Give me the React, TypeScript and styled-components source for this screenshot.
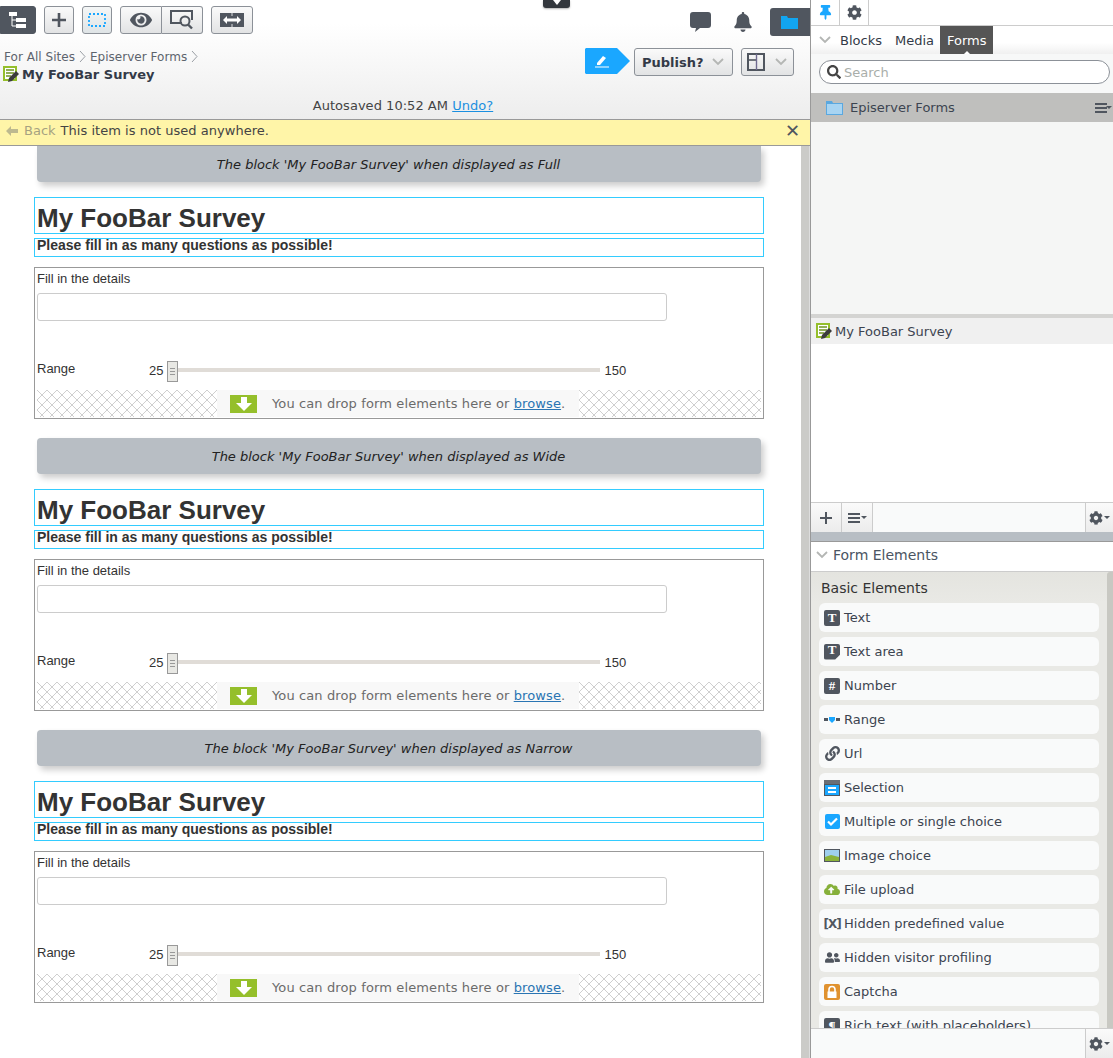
import React from "react";
import styled, { createGlobalStyle } from "styled-components";
import { FaBell, FaCog, FaEye, FaLink, FaSearch, FaThumbtack, FaUserFriends, FaCloudUploadAlt } from "react-icons/fa";

const Global = createGlobalStyle`
  html, body { margin: 0; padding: 0; background: #fff; }
  body { font-family: "DejaVu Sans", Verdana, sans-serif; font-size: 13px; color: #333; }
`;
const Page = styled.div`display: flex; width: 1113px; height: 1058px; overflow: hidden; position: relative;`;
const Main = styled.div`width: 810px; flex: none; display: flex; flex-direction: column;`;
const Header = styled.header`height: 119px; border-bottom: 1px solid #999; background: linear-gradient(#fff 20%, #ededed 100%); display: flex; flex-direction: column; box-sizing: content-box; flex: none;`;
const TopRow = styled.div`display: flex; align-items: flex-start; padding-top: 6px; height: 28px;`;
const Tools = styled.div`display: flex; gap: 8px; flex: 1;`;
const ToolBtn = styled.div<{ $w: number; $dark?: boolean; $tint?: boolean }>`
  width: ${p => p.$w}px; height: 28px; box-sizing: border-box; display: flex; align-items: center; justify-content: center;
  border: 1px solid ${p => (p.$dark ? "#50565f" : "#8c9198")}; border-radius: ${p => (p.$dark ? "0 3px 3px 0" : "3px")};
  background: ${p => (p.$dark ? "#50565f" : p.$tint ? "linear-gradient(#f4f6f6,#dfe4e6)" : "linear-gradient(#fafafa,#e2e3e4)")}; color: #50565f;
`;
const Group = styled.div`display: flex;`;
const GroupBtn = styled(ToolBtn)<{ $pos: "l" | "r" }>`
  border-radius: ${p => (p.$pos === "l" ? "3px 0 0 3px" : "0 3px 3px 0")};
  ${p => (p.$pos === "r" ? "border-left: none;" : "")}
`;
const RightIcons = styled.div`display: flex; align-items: flex-start; color: #50565f;`;
const IconSlot = styled.div<{ $gap: number }>`width: 21px; margin-left: ${p => p.$gap}px; height: 28px; display: flex; align-items: center; justify-content: center; font-size: 20px; margin-top: 2px;`;
const DarkTab = styled.div`width: 40px; height: 28px; margin: 2px 0 0 17px; background: #50565f; border-radius: 3px 0 0 3px; display: flex; align-items: center; justify-content: center; padding-right: 2px; box-sizing: border-box;`;
const InfoRow = styled.div`display: flex; justify-content: space-between; padding: 14px 16px 0 4px; height: 60px; box-sizing: border-box;`;
const Crumbs = styled.div`display: flex; flex-direction: column; padding-top: 1px;`;
const CrumbLine = styled.div`display: flex; align-items: center; height: 15px; font-size: 12px; color: #5d646d; gap: 4px; letter-spacing: .03px;`;
const TitleLine = styled.div`display: flex; align-items: center; height: 18px; gap: 2px; margin-top: 1px; margin-left: -1px; font-size: 13px; font-weight: bold; color: #333a47;`;
const Actions = styled.div`display: flex;`;
const EditFlag = styled.div`width: 45px; height: 26px; background: #1aa7ff; clip-path: polygon(0 1px, 1px 0, 32px 0, 45px 13px, 32px 26px, 1px 26px, 0 25px); display: flex; align-items: center; padding-left: 9px; box-sizing: border-box;`;
const PublishBtn = styled.div`margin-left: 4px; width: 99px; height: 28px; box-sizing: border-box; border: 1px solid #8c9198; border-radius: 3px; background: linear-gradient(#fafafa,#e2e3e4); display: flex; align-items: center; justify-content: space-between; padding: 0 8px 0 7px; font-weight: bold; font-size: 13px; color: #333a47;`;
const LayoutBtn = styled(PublishBtn)`margin-left: 8px; width: 53px; padding: 0 6px 0 5px;`;
const Autosaved = styled.div`height: 25px; padding-right: 4px; text-align: center; font-size: 13px; color: #444; line-height: 24px; letter-spacing: .03px;`;
const Link = styled.span`color: #1a8fe0; text-decoration: underline;`;
const Notice = styled.div`background: #fff5a8; border-bottom: 1px solid #999; display: flex; align-items: center; padding: 0 10px 4px 6px; font-size: 13px; color: #444; flex: none; box-sizing: content-box; height: 21px;`;
const Back = styled.span`color: #a6a281; margin: 0 5px 0 0; display: inline-flex; align-items: center; gap: 6px;`;
const NoticeText = styled.span`flex: 1; letter-spacing: .03px;`;
const Close = styled.span`font-size: 18px; font-weight: bold; color: #50565f; line-height: 1;`;
const Content = styled.div`flex: 1; display: flex; min-height: 0;`;
const Scroller = styled.div`flex: 1; background: #fff; overflow: hidden;`;
const ScrollBar = styled.div`width: 8px; background: #cbcbc8; border-right: 1px solid #ddd;`;
const Block = styled.section`width: 730px; margin-left: 34px; margin-bottom: 19px;`;
const Banner = styled.div`
  width: 724px; height: 36px; box-sizing: border-box; padding-right: 21px; margin-left: 3px; background: #b8bec4; border-radius: 0 0 4px 4px; box-shadow: 3px 4px 6px rgba(0,0,0,.2);
  display: flex; align-items: center; justify-content: center; font-style: italic; font-size: 13px; color: #222;
  &.next { border-radius: 4px; }
`;
const TitleBox = styled.div`margin-top: 15px; height: 37px; box-sizing: border-box; border: 1px solid #3cf; display: flex; align-items: center; padding: 5px 0 0 2px;`;
const Title = styled.h1`margin: 0; font: bold 26px "Liberation Sans", Arial, sans-serif; color: #333;`;
const SubBox = styled.div`margin-top: 4px; height: 19px; box-sizing: border-box; border: 1px solid #3cf; display: flex; align-items: center; padding: 0 0 5px 2px;`;
const Sub = styled.h2`margin: 0; font: bold 14px/14px "Liberation Sans", Arial, sans-serif; color: #333;`;
const FormBox = styled.div`margin-top: 10px; border: 1px solid #999; padding: 3px 2px 1px; font-family: "Liberation Sans", Arial, sans-serif; font-size: 13px; color: #333;`;
const Label = styled.div`height: 16px; line-height: 16px;`;
const Input = styled.div`margin-top: 6px; width: 630px; height: 28px; box-sizing: border-box; border: 1px solid #ccc; border-radius: 3px; background: #fff;`;
const RangeRow = styled.div`margin-top: 39px; height: 22px; display: flex; align-items: center;`;
const RangeLabel = styled.div`width: 112px; margin-top: -6px;`;
const RangeValue = styled.div`font-size: 13px; margin-top: -1px;`;
const Thumb = styled.div`width: 11px; height: 21px; box-sizing: border-box; margin-left: 4px; border: 1px solid #999; background: #e8e8e4; display: flex; flex-direction: column; align-items: center; justify-content: center; gap: 2px;`;
const ThumbLine = styled.i`display: block; width: 5px; height: 1px; background: #999;`;
const Track = styled.div`width: 422px; height: 4px; background: #e0dcd7; margin: -2px 4px 0 0;`;
const Drop = styled.div`margin-top: 8px; height: 27px; display: flex; background: #f8f8f8;`;
const Hatch = styled.div<{ $w: number }>`
  width: ${p => p.$w}px; flex: none; background-color: #fff;
  background-image:
    linear-gradient(45deg, transparent 46%, #cfcfcf 46% 54%, transparent 54%),
    linear-gradient(-45deg, transparent 46%, #cfcfcf 46% 54%, transparent 54%);
  background-size: 10px 10px;
`;
const DropMid = styled.div`flex: 1; display: flex; align-items: center; padding-left: 13px; font-family: "DejaVu Sans", Verdana, sans-serif; font-size: 13px; color: #6b6b6b; gap: 15px; letter-spacing: .12px;`;
const Arrow = styled.div`width: 27px; height: 18px; background: #95bf2b; display: flex; align-items: center; justify-content: center;`;
const BrowseLink = styled.span`color: #2a75b3; text-decoration: underline;`;
const Tip = styled.div`position: absolute; left: 543px; top: 0; width: 27px; height: 8px; background: #33373d; border-radius: 0 0 3px 3px; box-shadow: 0 1px 2px rgba(0,0,0,.3); display: flex; justify-content: center;`;

const Side = styled.aside`flex: 1; border-left: 1px solid #999; display: flex; flex-direction: column; background: #fff; min-width: 0;`;
const PinBar = styled.div`height: 25px; border-bottom: 1px solid #ccc; display: flex; flex: none; color: #50565f;`;
const PinBtn = styled.div`width: 28px; border-right: 1px solid #ccc; display: flex; align-items: center; justify-content: center; font-size: 15px;`;
const Tabs = styled.div`height: 28px; display: flex; align-items: stretch; flex: none; background: linear-gradient(#fff 60%, #f0f0f0); padding-left: 5px; font-size: 13px; color: #333a47;`;
const Chev = styled.div`width: 17px; margin-right: .5px; display: flex; align-items: center; justify-content: center;`;
const Tab = styled.div<{ $on?: boolean }>`
  padding: 0 6.5px; display: flex; align-items: center; position: relative;
  ${p => (p.$on ? "background: #555; color: #fff;" : "")}
  ${p => (p.$on ? `&::after { content: ""; position: absolute; left: 50%; margin-left: -3px; bottom: 0; border: 3px solid transparent; border-top: 0; border-bottom-color: #fff; }` : "")}
`;
const SearchRow = styled.div`height: 39px; flex: none; padding: 6px 3px 0 8px; box-sizing: border-box; background: #f7f8f8;`;
const SearchBox = styled.div`height: 24px; box-sizing: border-box; border: 1px solid #8c9198; border-radius: 12px; background: #fff; display: flex; align-items: center; padding-left: 7px; gap: 3px; color: #a9aeaa; font-size: 13px;`;
const FolderRow = styled.div`height: 29px; flex: none; background: #bfbfbd; display: flex; align-items: center; padding: 0 1px 0 15px; gap: 7px; color: #3c4450;`;
const RowText = styled.span`flex: 1;`;
const Tree = styled.div`height: 192px; flex: none; background: #f5f6f5;`;
const Splitter = styled.div<{ $h: number }>`height: ${p => p.$h}px; flex: none; background: #b8bec4; box-sizing: border-box; border-bottom: 1px solid #999;`;
const ThinSplit = styled.div`height: 4px; flex: none; background: #d4d4d2;`;
const SelRow = styled.div`height: 26px; flex: none; background: #f0f0f0; display: flex; align-items: center; padding-left: 5px; gap: 2px; color: #3c4450;`;
const Blank = styled.div`height: 158px; flex: none; background: #fff;`;
const Bar = styled.div`height: 30px; flex: none; border-top: 1px solid #ccc; box-sizing: border-box; background: #f9fafa; display: flex; color: #50565f;`;
const BarBtn = styled.div`width: 30px; border-right: 1px solid #ccc; background: linear-gradient(#fafafa,#ececec); display: flex; align-items: center; justify-content: center; gap: 1px; font-size: 15px;`;
const BarRight = styled.div`width: 27px; margin-left: auto; border-left: 1px solid #ccc; background: linear-gradient(#fafafa,#ececec); display: flex; align-items: center; justify-content: center; gap: 1px; font-size: 14px;`;
const Caret = styled.i<{ $pull?: boolean }>`display: block; border: 3px solid transparent; border-top-color: #50565f; border-bottom: 0; ${p => (p.$pull ? "margin-left: -8px;" : "")}`;
const ElHead = styled.div`height: 30px; flex: none; box-sizing: border-box; border-bottom: 1px solid #ccc; display: flex; align-items: center; padding: 0 0 4px 5px; gap: 5px; font-size: 14px; color: #4a5462;`;
const Elements = styled.div`flex: 1; min-height: 0; overflow: hidden; display: flex; background: linear-gradient(#e4e4df, #e9e9e5 30px);`;
const ElList = styled.div`flex: 1; padding: 0 8px; display: flex; flex-direction: column; gap: 5px;`;
const ElTitle = styled.div`height: 19px; font-size: 14px; color: #333; padding: 7px 0 0 2px; line-height: 19px; flex: none;`;
const Item = styled.div`height: 29px; flex: none; background: #f9fafa; border-radius: 6px; display: flex; align-items: center; padding-left: 5px; gap: 4px; color: #3c4450; font-size: 13px;`;
const IconBox = styled.div`width: 16px; height: 16px; display: flex; align-items: center; justify-content: center; flex: none; color: #50565f; font-size: 15px;`;
const GlyphIcon = styled.span<{ $clip?: boolean }>`
  width: 16px; height: 16px; background: #50565f; color: #fff; border-radius: 2px; display: flex; align-items: center; justify-content: center;
  font: bold 13px "Liberation Serif", serif; position: relative;
  ${p => (p.$clip ? "clip-path: polygon(0 0,100% 0,100% 70%,70% 100%,0 100%); padding-bottom: 3px; box-sizing: border-box;" : "")}
`;
const BracketIcon = styled.span`font: bold 12px "DejaVu Sans", sans-serif; color: #50565f; letter-spacing: -1px; white-space: nowrap;`;
const ScrollThumb = styled.div`width: 6px; flex: none; background: #c8c8c2; border-radius: 3px 0 0 0;`;

const FormIcon = () => (
  <svg width="17" height="17" viewBox="0 0 17 17">
    <rect x="0" y="0" width="14" height="15" fill="#95bf2b" />
    <rect x="2" y="2" width="10" height="11" fill="#fff" />
    <path d="M3 4h8M3 7h8M3 10h5" stroke="#6f9420" strokeWidth="1.4" />
    <path d="M5 16l1-4 7-7 3 3-7 7z" fill="#3c3c3c" />
  </svg>
);
const ChevR = () => (
  <svg width="7" height="13" viewBox="0 0 7 13"><path d="M1 1l5 5.5L1 12" fill="none" stroke="#9a9fa5" /></svg>
);
const ChevD = ({ c = "#b4b6b4" }: { c?: string }) => (
  <svg width="12" height="8" viewBox="0 0 12 8"><path d="M1 1l5 5 5-5" fill="none" stroke={c} strokeWidth="1.8" /></svg>
);
const HamIcon = () => (
  <svg width="12" height="10" viewBox="0 0 12 10"><path d="M0 1h12M0 5h12M0 9h12" stroke="#50565f" strokeWidth="2" /></svg>
);
const Folder = () => (
  <svg width="17" height="15" viewBox="0 0 17 15">
    <path d="M0 1h6l1 2h10v12H0z" fill="#5aa8e0" />
    <rect x="1" y="4" width="15" height="10" fill="#a8d4f2" />
  </svg>
);

const Survey = ({ kind, next }: { kind: string; next: boolean }) => (
  <Block>
    <Banner className={next ? "next" : ""}>The block 'My FooBar Survey' when displayed as {kind}</Banner>
    <TitleBox><Title>My FooBar Survey</Title></TitleBox>
    <SubBox><Sub>Please fill in as many questions as possible!</Sub></SubBox>
    <FormBox>
      <Label>Fill in the details</Label>
      <Input />
      <RangeRow>
        <RangeLabel>Range</RangeLabel>
        <RangeValue>25</RangeValue>
        <Thumb><ThumbLine /><ThumbLine /><ThumbLine /></Thumb>
        <Track />
        <RangeValue>150</RangeValue>
      </RangeRow>
      <Drop>
        <Hatch $w={180} />
        <DropMid>
          <Arrow>
            <svg width="16" height="14" viewBox="0 0 16 14"><path d="M5 0h6v6h5l-8 8-8-8h5z" fill="#fff" /></svg>
          </Arrow>
          <span>You can drop form elements here or <BrowseLink>browse</BrowseLink>.</span>
        </DropMid>
        <Hatch $w={182} />
      </Drop>
    </FormBox>
  </Block>
);

const elementRows: { label: string; icon: React.ReactNode }[] = [
  { label: "Text", icon: <GlyphIcon>T</GlyphIcon> },
  { label: "Text area", icon: <GlyphIcon $clip>T</GlyphIcon> },
  { label: "Number", icon: <GlyphIcon>#</GlyphIcon> },
  { label: "Range", icon: <svg width="16" height="8" viewBox="0 0 16 8"><path d="M0 2h4v3H0zM12 2h4v3h-4z" fill="#50565f" /><path d="M5 1h6v3L8 7 5 4z" fill="#1aa7ff" /></svg> },
  { label: "Url", icon: <FaLink /> },
  { label: "Selection", icon: <svg width="16" height="16" viewBox="0 0 16 16"><rect width="16" height="4" fill="#6a6e75" /><rect x=".5" y="4.5" width="15" height="11" fill="#1aa7ff" stroke="#50565f" /><path d="M4 8h8M4 12h8" stroke="#fff" strokeWidth="2" /></svg> },
  { label: "Multiple or single choice", icon: <svg width="15" height="15" viewBox="0 0 15 15"><rect width="15" height="15" rx="2" fill="#1aa7ff" /><path d="M3 7.5l3 3 6-6" fill="none" stroke="#fff" strokeWidth="2.2" /></svg> },
  { label: "Image choice", icon: <svg width="16" height="13" viewBox="0 0 16 13"><rect x=".5" y=".5" width="15" height="12" fill="#9fd0ee" stroke="#50565f" /><path d="M1 8l6-2 8 2v4H1z" fill="#8bb33a" /></svg> },
  { label: "File upload", icon: <FaCloudUploadAlt color="#86b03a" size={17} /> },
  { label: "Hidden predefined value", icon: <BracketIcon>[X]</BracketIcon> },
  { label: "Hidden visitor profiling", icon: <FaUserFriends size={15} /> },
  { label: "Captcha", icon: <svg width="16" height="16" viewBox="0 0 16 16"><rect width="16" height="16" rx="2" fill="#e0922f" /><path d="M5 8V5.5a3 3 0 0 1 6 0V8" fill="none" stroke="#fff" strokeWidth="1.6" /><rect x="3.5" y="7.5" width="9" height="6.5" fill="#fff" /></svg> },
  { label: "Rich text (with placeholders)", icon: <GlyphIcon>¶</GlyphIcon> },
];

export default function App() {
  return (
    <Page>
      <Global />
      <Main>
        <Header>
          <TopRow>
            <Tools>
              <ToolBtn $w={36} $dark>
                <svg width="20" height="18" viewBox="0 0 20 18" fill="none"><rect x="1" y="1" width="8" height="4" fill="#fff" /><path d="M4 5v10h4M4 9h4" stroke="#fff" /><rect x="8" y="7" width="10" height="4" fill="#fff" /><rect x="8" y="13" width="10" height="4" fill="#fff" /></svg>
              </ToolBtn>
              <ToolBtn $w={30}>
                <svg width="16" height="16" viewBox="0 0 16 16"><path d="M8 1v14M1 8h14" stroke="#50565f" strokeWidth="2.6" /></svg>
              </ToolBtn>
              <ToolBtn $w={30} $tint>
                <svg width="18" height="14" viewBox="0 0 18 14"><rect x="1" y="1" width="16" height="12" fill="none" stroke="#1aa7ff" strokeWidth="1.8" strokeDasharray="2 2" /></svg>
              </ToolBtn>
              <Group>
                <GroupBtn $w={42} $pos="l"><FaEye size={22} /></GroupBtn>
                <GroupBtn $w={41} $pos="r">
                  <svg width="24" height="20" viewBox="0 0 24 20" fill="none"><path d="M12 13H1V1h21v9" stroke="#50565f" strokeWidth="2" /><circle cx="15" cy="11" r="4.5" stroke="#50565f" strokeWidth="2" /><path d="M18 14.5l4 4" stroke="#50565f" strokeWidth="2.4" /></svg>
                </GroupBtn>
              </Group>
              <ToolBtn $w={42}>
                <svg width="24" height="14" viewBox="0 0 24 14"><rect width="24" height="14" fill="#50565f" /><path d="M3 7l4-4v2.5h10V3l4 4-4 4V8.500H7V11z" fill="#fff" /><path d="M12 0v3M12 11v3" stroke="#fff" strokeWidth=".8" /></svg>
              </ToolBtn>
            </Tools>
            <RightIcons>
              <IconSlot $gap={0}>
                <svg width="21" height="20" viewBox="0 0 21 20"><path d="M3 0h15a3 3 0 0 1 3 3v10a3 3 0 0 1-3 3H10l-5 4 1-4H3a3 3 0 0 1-3-3V3a3 3 0 0 1 3-3z" fill="#50565f" /></svg>
              </IconSlot>
              <IconSlot $gap={21}><FaBell /></IconSlot>
              <DarkTab>
                <svg width="17" height="13" viewBox="0 0 17 13"><path d="M0 0h6l1 2h10v11H0z" fill="#12a5f0" /></svg>
              </DarkTab>
            </RightIcons>
          </TopRow>
          <InfoRow>
            <Crumbs>
              <CrumbLine>For All Sites <ChevR /> Episerver Forms <ChevR /></CrumbLine>
              <TitleLine><FormIcon /> My FooBar Survey</TitleLine>
            </Crumbs>
            <Actions>
              <EditFlag>
                <svg width="16" height="14" viewBox="0 0 16 14"><path d="M3 9l6-7 3 2-6 7H3z" fill="#fff" /><path d="M1 13h14" stroke="#fff" /></svg>
              </EditFlag>
              <PublishBtn>Publish? <ChevD /></PublishBtn>
              <LayoutBtn>
                <svg width="18" height="18" viewBox="0 0 18 18" fill="none"><rect x="1" y="1" width="16" height="16" stroke="#50565f" strokeWidth="2" /><path d="M1 7h8" stroke="#50565f" strokeWidth="1.6" /><path d="M9.500 1v16" stroke="#6f6a90" strokeWidth="1.4" /></svg>
                <ChevD />
              </LayoutBtn>
            </Actions>
          </InfoRow>
          <Autosaved>Autosaved 10:52 AM <Link>Undo?</Link></Autosaved>
        </Header>
        <Notice>
          <Back>
            <svg width="12" height="10" viewBox="0 0 12 10"><path d="M0 5l5-5v3h7v4H5v3z" fill="#bdb98f" /></svg>
            Back
          </Back>
          <NoticeText>This item is not used anywhere.</NoticeText>
          <Close>✕</Close>
        </Notice>
        <Content>
          <Scroller>
            <Survey kind="Full" next={false} />
            <Survey kind="Wide" next />
            <Survey kind="Narrow" next />
          </Scroller>
          <ScrollBar />
        </Content>
      </Main>
      <Side>
        <PinBar>
          <PinBtn><FaThumbtack color="#1aa7ff" /></PinBtn>
          <PinBtn><FaCog /></PinBtn>
        </PinBar>
        <Tabs>
          <Chev><ChevD /></Chev>
          <Tab>Blocks</Tab>
          <Tab>Media</Tab>
          <Tab $on>Forms</Tab>
        </Tabs>
        <SearchRow>
          <SearchBox><FaSearch color="#444" size={14} /> Search</SearchBox>
        </SearchRow>
        <FolderRow>
          <Folder />
          <RowText>Episerver Forms</RowText>
          <HamIcon /><Caret $pull />
        </FolderRow>
        <Tree />
        <ThinSplit />
        <SelRow><FormIcon /> My FooBar Survey</SelRow>
        <Blank />
        <Bar>
          <BarBtn>
            <svg width="14" height="14" viewBox="0 0 14 14"><path d="M7 1v12M1 7h12" stroke="#50565f" strokeWidth="2" /></svg>
          </BarBtn>
          <BarBtn><HamIcon /><Caret /></BarBtn>
          <BarRight><FaCog /><Caret /></BarRight>
        </Bar>
        <Splitter $h={10} />
        <ElHead><ChevD /> Form Elements</ElHead>
        <Elements>
          <ElList>
            <ElTitle>Basic Elements</ElTitle>
            {elementRows.map(r => (
              <Item key={r.label}><IconBox>{r.icon}</IconBox>{r.label}</Item>
            ))}
          </ElList>
          <ScrollThumb />
        </Elements>
        <Bar>
          <BarRight><FaCog /><Caret /></BarRight>
        </Bar>
      </Side>
      <Tip>
        <svg width="12" height="6" viewBox="0 0 12 6"><path d="M2 0h8L6 5z" fill="#fff" /></svg>
      </Tip>
    </Page>
  );
}
